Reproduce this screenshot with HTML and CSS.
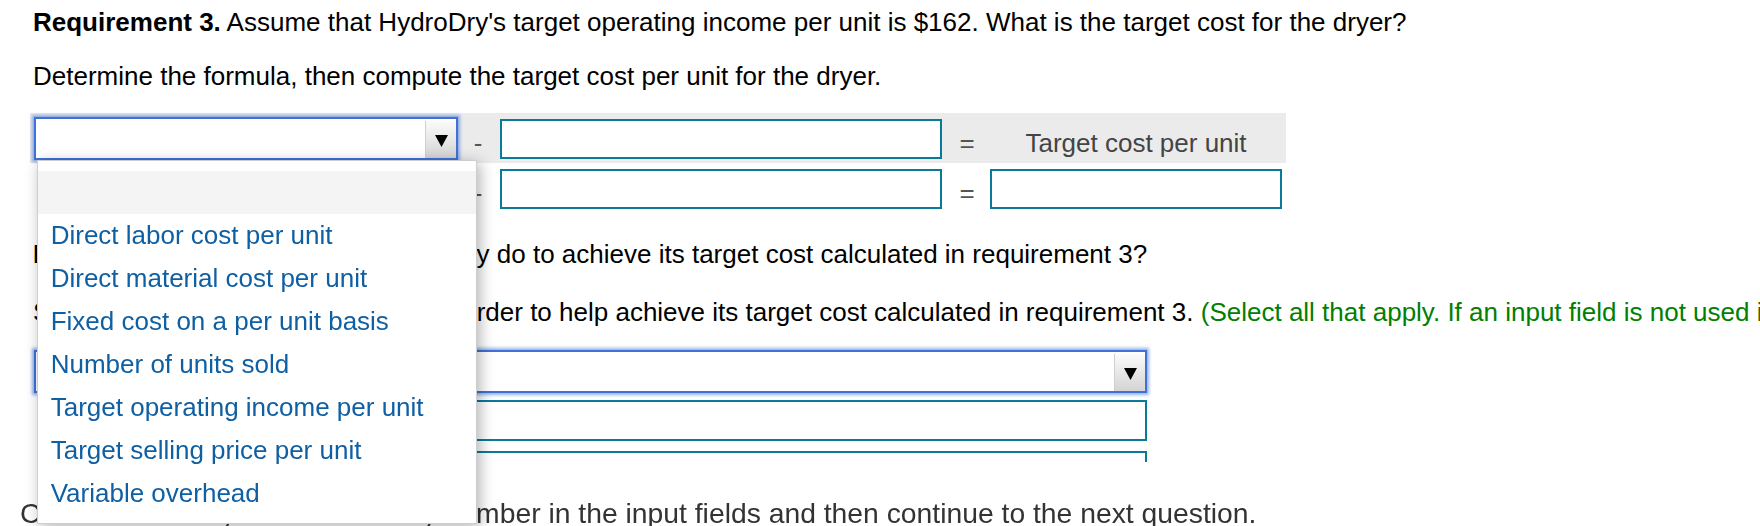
FILE: index.html
```html
<!DOCTYPE html>
<html lang="en">
<head>
<meta charset="utf-8">
<title>Requirement 3</title>
<link rel="stylesheet" href="styles.css">
</head>
<body>
<div class="content">
  <p class="q q1"><b>Requirement 3.</b> Assume that HydroDry's target operating income per unit is $162. What is the target cost for the dryer?</p>
  <p class="q q2">Determine the formula, then compute the target cost per unit for the dryer.</p>

  <div class="formula">
    <div class="frow head">
      <div class="c1">
        <div class="selwrap">
          <div class="sel sel1"><span class="arrow"><svg width="13" height="12" viewBox="0 0 13 12"><path d="M0 0H13L6.5 12Z"/></svg></span></div>
          <ul class="menu">
            <li class="opt blank"></li>
            <li class="opt">Direct labor cost per unit</li>
            <li class="opt">Direct material cost per unit</li>
            <li class="opt">Fixed cost on a per unit basis</li>
            <li class="opt">Number of units sold</li>
            <li class="opt">Target operating income per unit</li>
            <li class="opt">Target selling price per unit</li>
            <li class="opt">Variable overhead</li>
          </ul>
        </div>
      </div>
      <div class="op">-</div>
      <div class="c3"><input class="inp inp3" type="text"></div>
      <div class="op">=</div>
      <div class="label">Target cost per unit</div>
    </div>
    <div class="frow">
      <div class="c1"><input class="inp inp1" type="text"></div>
      <div class="op">-</div>
      <div class="c3"><input class="inp inp3" type="text"></div>
      <div class="op">=</div>
      <div class="c5"><input class="inp inp5" type="text"></div>
    </div>
  </div>

  <p class="q q3"><b>Requirement 4.</b> What should HydroDry do to achieve its target cost calculated in requirement 3?</p>
  <p class="q q4">Select the things HydroDry can do in order to help achieve its target cost calculated in requirement 3. <span class="hint">(Select all that apply. If an input field is not used in the table leave the input field empty; do not select a label or enter a zero.)</span></p>

  <div class="steps">
    <div class="sel sel2"><span class="arrow"><svg width="13" height="12" viewBox="0 0 13 12"><path d="M0 0H13L6.5 12Z"/></svg></span></div>
    <input class="inp step stepA" type="text">
    <input class="inp step stepB" type="text">
  </div>
</div>

<div class="footer">Choose from any list or enter any number in the input fields and then continue to the next question.</div>
</body>
</html>
```

FILE: styles.css
```css
html, body {
  margin: 0;
  padding: 0;
  overflow: hidden;
  background: #fff;
}

body {
  font-family: "Liberation Sans", Arial, Helvetica, sans-serif;
  font-size: 26px;
  color: #000;
  width: 1760px;
  height: 526px;
}

.content {
  padding: 7px 0 0 33px;
}

.q {
  margin: 0;
  line-height: 30px;
  white-space: nowrap;
}

.q2 { margin-top: 23.5px; }
.q3 { margin-top: 24px; }
.q4 { margin-top: 28px; }

.hint { color: #008000; }

/* formula table */
.formula {
  margin: 22.4px 0 0 -3px;
  width: 1256px;
}

.frow {
  display: grid;
  grid-template-columns: 432px 32px 454px 38px 300px;
  align-items: start;
  height: 52px;
}

.frow.head {
  height: 50px;
  background: #ebebeb;
}

.op {
  margin-top: 15.5px;
  line-height: 30px;
  text-align: center;
  color: #555;
}

.label {
  margin-top: 15.5px;
  line-height: 30px;
  text-align: center;
  color: #444;
}

.inp {
  display: block;
  box-sizing: border-box;
  height: 40px;
  margin: 6px 0 0 0;
  padding: 0;
  border: 2px solid #0a7a99;
  border-radius: 0;
  background: #fff;
  font: inherit;
  outline: none;
}

.inp1 { width: 416px; margin-left: 10px; }
.inp3 { width: 442px; margin-left: 6px; }
.inp5 { width: 292px; margin-left: 4px; }

/* select boxes */
.selwrap {
  position: relative;
  margin: 4px 0 0 4px;
  width: 424px;
}

.sel {
  display: flex;
  box-sizing: border-box;
  height: 43px;
  background: #fff;
  border: 2px solid #3f72d8;
  box-shadow: 0 0 3px 2px rgba(63, 114, 216, 0.55);
}

.sel1 { width: 424px; }

.arrow {
  box-sizing: border-box;
  display: flex;
  align-items: center;
  justify-content: center;
  width: 31px;
  height: 37px;
  margin: 2px 0 0 auto;
  background: linear-gradient(#fbfbfb, #d4d4d4);
  border-left: 1px solid #cfcfcf;
  padding-top: 3px;
}

.arrow svg { display: block; fill: #000; }

/* open dropdown menu */
.menu {
  position: absolute;
  top: 100%;
  left: 3px;
  z-index: 10;
  box-sizing: border-box;
  width: 440px;
  margin: 0;
  padding: 10px 0 8px;
  list-style: none;
  background: #fff;
  border: 1px solid #cecece;
  box-shadow: 3px 3px 14px rgba(0, 0, 0, 0.3);
}

.opt {
  height: 43px;
  line-height: 43px;
  padding-left: 12.7px;
  font-size: 26px;
  color: #0f5fa3;
  white-space: nowrap;
}

.opt.blank { background: #f4f4f4; }

/* requirement 4 list */
.steps {
  width: 1113px;
  margin-left: 1px;
}

.sel2 {
  width: 1113px;
  margin-top: 23.4px;
}

.step {
  width: 1107px;
  height: 41px;
  margin-left: 6px;
}

.stepA { margin-top: 7.2px; }
.stepB { margin-top: 10px; }

/* fixed instruction bar */
.footer {
  position: fixed;
  left: 0;
  right: 0;
  bottom: 0;
  z-index: 5;
  height: 64px;
  box-sizing: border-box;
  padding: 35.5px 0 0 20px;
  background: #fff;
  font-size: 28.3px;
  line-height: 30px;
  color: #333;
  white-space: nowrap;
}
```
